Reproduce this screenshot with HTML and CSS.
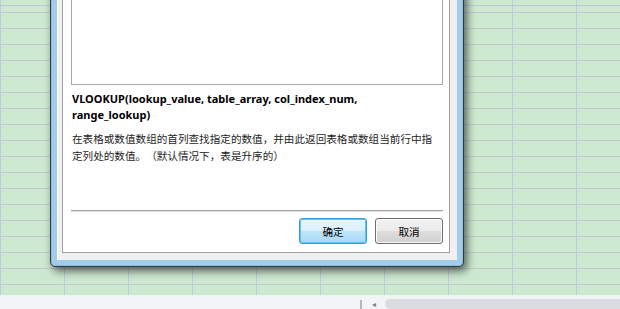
FILE: index.html
```html
<!DOCTYPE html>
<html lang="zh-CN">
<head>
<meta charset="utf-8">
<title>函数参数</title>
<link rel="stylesheet" href="styles.css">
</head>
<body>
<div class="screen">
  <div class="sheet">
    <div class="dialog">
      <div class="dialog-body">
        <div class="panel">
          <div class="listbox"></div>
          <div class="func-sig">VLOOKUP(lookup_value, table_array, col_index_num, range_lookup)</div>
          <div class="func-desc">在表格或数值数组的首列查找指定的数值，并由此返回表格或数组当前行中指定列处的数值。（默认情况下，表是升序的）</div>
          <div class="spacer"></div>
          <div class="separator"></div>
          <div class="buttons">
            <button class="btn btn-default">确定</button>
            <button class="btn">取消</button>
          </div>
        </div>
      </div>
    </div>
  </div>
  <div class="hscroll">
    <div class="hs-left"></div>
    <div class="hs-divider"></div>
    <div class="hs-arrow">◂</div>
    <div class="hs-track"></div>
  </div>
</div>
</body>
</html>
```
FILE: styles.css
```css
html, body {
  margin: 0;
  padding: 0;
}
body {
  width: 620px;
  height: 309px;
  overflow: hidden;
  font-family: "Noto Sans", "Noto Sans CJK SC", sans-serif;
}
.screen {
  display: flex;
  flex-direction: column;
  width: 620px;
  height: 309px;
}
.sheet {
  position: relative;
  height: 295px;
  flex: none;
  background-color: rgb(204, 232, 207);
  background-image:
    repeating-linear-gradient(90deg, rgb(196, 200, 214) 0 1px, transparent 1px 64px),
    repeating-linear-gradient(180deg, rgb(196, 200, 214) 0 1px, transparent 1px 16px);
  background-position: 0 0, 0 12px;
}
.dialog {
  position: absolute;
  left: 50px;
  top: -40px;
  width: 414px;
  height: 307px;
  box-sizing: border-box;
  border: 1px solid #2f3a42;
  border-radius: 0 0 5px 5px;
  background: #a3cce8;
  padding: 6px;
  display: flex;
  flex-direction: column;
  box-shadow: inset 0 0 0 1px #8fbddc, 3px 4px 9px rgba(0, 0, 0, 0.6);
}
.dialog-body {
  flex: 1;
  display: flex;
  flex-direction: column;
  background: #f0f0f0;
  padding: 5px 7px 7px 5px;
  box-shadow: inset 1px 1px 0 #ffffff;
}
.panel {
  flex: 1;
  display: flex;
  flex-direction: column;
  background: #fff;
  border: 1px solid #a0a0a0;
  padding: 0 6px 8px 8px;
}
.listbox {
  height: 112px;
  box-sizing: border-box;
  border: 1px solid #a9a9a9;
  background: #fff;
  flex: none;
}
.func-sig {
  margin-top: 6px;
  font-family: "Noto Sans", sans-serif;
  font-weight: bold;
  font-size: 11px;
  line-height: 16px;
  color: #000;
  width: 300px;
  padding-left: 1px;
}
.func-desc {
  margin-top: 7px;
  font-family: "Noto Sans CJK SC", sans-serif;
  font-size: 10.6px;
  line-height: 17px;
  color: #1e1e1e;
  width: 368px;
  padding-left: 1px;
  text-spacing-trim: space-all;
}
.spacer {
  flex: 1;
}
.separator {
  height: 2px;
  box-sizing: border-box;
  border-top: 1px solid #a0a0a0;
  border-bottom: 1px solid #e2e2e2;
  flex: none;
}
.buttons {
  margin-top: 6px;
  display: flex;
  justify-content: flex-end;
  gap: 8px;
}
.btn {
  width: 68px;
  height: 26px;
  box-sizing: border-box;
  border: 1px solid #707070;
  border-radius: 3px;
  background: linear-gradient(180deg, #f2f2f2 0%, #ebebeb 48%, #dddddd 52%, #cfcfcf 100%);
  box-shadow: inset 0 0 0 1px #fbfbfb;
  font-family: "Noto Sans CJK SC", sans-serif;
  font-size: 10.6px;
  color: #000;
  padding: 0;
}
.btn-default {
  border-color: #3c9bd6;
  background: linear-gradient(180deg, #eaf6fd 0%, #d9f0fc 48%, #bee6fd 52%, #a7d9f5 100%);
  box-shadow: inset 0 0 0 1px #5fc3f0;
}
.hscroll {
  height: 14px;
  flex: none;
  display: flex;
  align-items: stretch;
  background: #f3f4f6;
}
.hs-left {
  width: 360px;
}
.hs-divider {
  width: 2px;
  margin-top: 5px;
  background: #b4b6bd;
}
.hs-arrow {
  width: 23px;
  font-size: 8px;
  line-height: 14px;
  padding-top: 2px;
  box-sizing: border-box;
  color: #7d8088;
  text-align: center;
}
.hs-track {
  flex: 1;
  margin-top: 4px;
  background: #dadce2;
  border-radius: 6px 0 0 6px;
}
```
